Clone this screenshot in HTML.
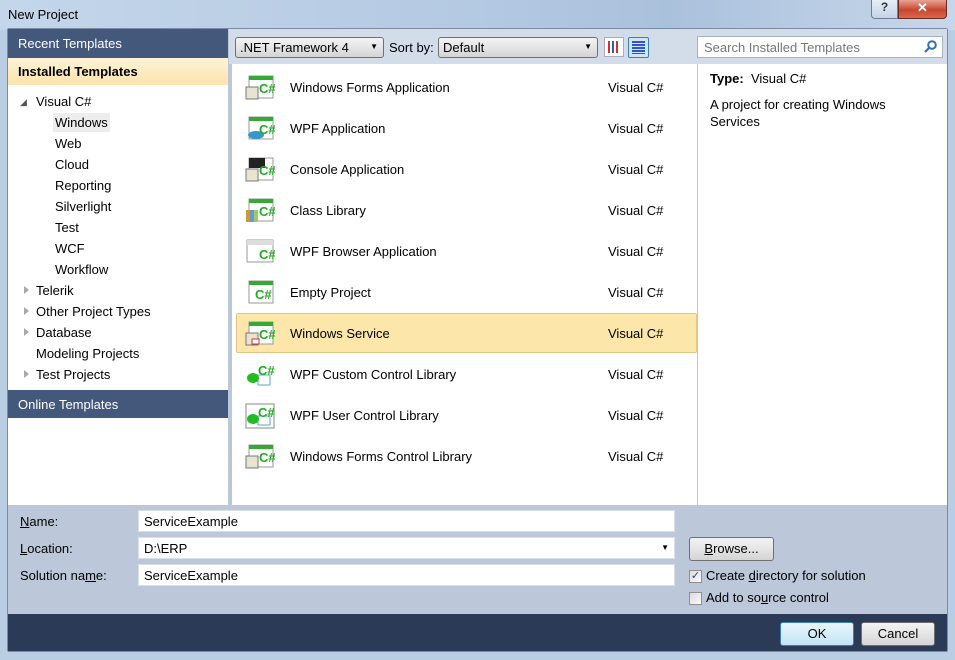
<!DOCTYPE html>
<html><head><meta charset="utf-8"><style>
*{margin:0;padding:0;box-sizing:border-box}
body{width:955px;height:660px;overflow:hidden;background:#b9cde3;font-family:"Liberation Sans",sans-serif;font-size:12.5px;color:#000;position:relative}
.a{position:absolute}
.title{left:0;top:0;width:955px;height:30px;background:linear-gradient(90deg,#c4d6ea,#b4c9e2 50%,#aac1dc 70%,#c7d7ea);}
.t{white-space:nowrap}
.hdr{background:#44587c;color:#fff;font-size:13px;padding-left:10px}
.tree div{position:absolute;white-space:nowrap;font-size:13px}
.tri{position:absolute;width:0;height:0;border-top:4px solid transparent;border-bottom:4px solid transparent;border-left:5px solid #aaa}
.row{position:absolute;left:236px;width:461px;height:40px}
.row .n{position:absolute;left:54px;top:13px;font-size:13px}
.row .l{position:absolute;left:372px;top:13px;font-size:13px}
.ic{position:absolute;left:9px;top:6px;width:30px;height:28px}
.inp{background:#fff;border:1px solid #d8dfe8;height:22px;padding:3px 5px;font-size:13px}
.btn{border:1px solid #707070;border-radius:3px;background:linear-gradient(#f3f3f3,#e5e5e5 50%,#d4d4d4);text-align:center;font-size:13px}
.cb{width:13px;height:13px;border:1px solid #8e8f8f;background:linear-gradient(135deg,#dcdcdc,#fafafa)}
</style></head><body>
<div class="a title"></div>
<div class="a t" style="left:8px;top:7px;font-size:13px">New Project</div>
<div class="a" style="left:871px;top:0;width:27px;height:19px;border:1px solid #6d7f98;border-top:none;border-radius:0 0 0 4px;background:linear-gradient(#e6eef8,#c3d3e6);text-align:center;font-size:12px;color:#333;font-weight:bold">?</div>
<div class="a" style="left:898px;top:0;width:49px;height:19px;border:1px solid #6d2a22;border-top:none;border-radius:0 0 4px 0;background:linear-gradient(#e8a493,#c7462f 55%,#d66a4f);text-align:center;color:#fff;font-weight:bold;font-size:13px">✕</div>

<div class="a" style="left:7px;top:28px;width:941px;height:624px;background:#bcc8d9;border:1px solid #7a8ba4;border-radius:2px"></div>
<div class="a hdr" style="left:8px;top:29px;width:220px;height:29px;line-height:29px">Recent Templates</div>
<div class="a" style="left:8px;top:58px;width:220px;height:27px;background:linear-gradient(#fdf3d6,#fbe4ad);font-weight:bold;font-size:13px;padding:6px 10px">Installed Templates</div>
<div class="a tree" style="left:8px;top:85px;width:220px;height:305px;background:#fff">
<div style="left:12px;top:12px;font-size:9px;color:#555">◢</div>
<div style="left:28px;top:9px">Visual C#</div>
<div style="left:45px;top:28px;background:#ededed;padding:2px 2px;">Windows</div>
<div style="left:47px;top:51px">Web</div>
<div style="left:47px;top:72px">Cloud</div>
<div style="left:47px;top:93px">Reporting</div>
<div style="left:47px;top:114px">Silverlight</div>
<div style="left:47px;top:135px">Test</div>
<div style="left:47px;top:156px">WCF</div>
<div style="left:47px;top:177px">Workflow</div>
<span class="tri" style="left:16px;top:201px"></span><div style="left:28px;top:198px">Telerik</div>
<span class="tri" style="left:16px;top:222px"></span><div style="left:28px;top:219px">Other Project Types</div>
<span class="tri" style="left:16px;top:243px"></span><div style="left:28px;top:240px">Database</div>
<div style="left:28px;top:261px">Modeling Projects</div>
<span class="tri" style="left:16px;top:285px"></span><div style="left:28px;top:282px">Test Projects</div>
</div>
<div class="a hdr" style="left:8px;top:390px;width:220px;height:28px;line-height:29px">Online Templates</div>
<div class="a" style="left:8px;top:418px;width:220px;height:87px;background:#fff"></div>

<div class="a" style="left:229px;top:29px;width:718px;height:35px;background:#d3dde9"></div>
<div class="a btn" style="left:235px;top:37px;width:149px;height:21px;text-align:left;padding:2px 4px;font-size:13px">.NET Framework 4<span style="position:absolute;right:5px;top:4px;font-size:8px">▼</span></div>
<div class="a t" style="left:389px;top:40px;font-size:13px">Sort by:</div>
<div class="a btn" style="left:438px;top:37px;width:160px;height:21px;text-align:left;padding:2px 4px;font-size:13px">Default<span style="position:absolute;right:5px;top:4px;font-size:8px">▼</span></div>
<div class="a" style="left:604px;top:37px;width:20px;height:20px;border:1px solid #aab;background:#fff"><div style="margin:3px;width:12px;height:12px;background:repeating-linear-gradient(90deg,#c33 0 2px,#fff 2px 4px,#35c 4px 6px,#fff 6px 8px)"></div></div>
<div class="a" style="left:628px;top:37px;width:21px;height:21px;border:1px solid #3c7fb1;border-radius:2px;background:#cbe6f7"><div style="margin:3px;width:13px;height:13px;background:repeating-linear-gradient(#35c 0 2px,transparent 2px 3px)"></div></div>
<div class="a" style="left:697px;top:36px;width:246px;height:22px;background:#fff;border:1px solid #a5b3c6;color:#777;font-size:13px;padding:3px 6px">Search Installed Templates<svg style="position:absolute;right:5px;top:3px" width="13" height="14"><circle cx="8" cy="5" r="3.8" fill="none" stroke="#2e6fb8" stroke-width="2"/><line x1="5" y1="8" x2="1" y2="12" stroke="#2e6fb8" stroke-width="2.2"/></svg></div>

<div class="a" style="left:232px;top:64px;width:465px;height:441px;background:#fff"></div>
<div class="a" style="left:698px;top:64px;width:249px;height:441px;background:#fff"></div>
<div class="a t" style="left:710px;top:71px;font-size:13px"><b>Type:</b>&nbsp; Visual C#</div>
<div class="a" style="left:710px;top:96px;font-size:13px;line-height:17px;width:220px">A project for creating Windows Services</div>

<div class="row" style="top:313px;background:#fce6a9;border:1px solid #e4c785;border-radius:2px"></div>

<div class="row" style="top:67px"><div class="ic"><svg width="30" height="28"><rect x="4" y="3" width="24" height="22" fill="#fff" stroke="#999"/><rect x="4" y="3" width="24" height="4" fill="#3a3"/><rect x="1" y="14" width="12" height="12" fill="#e9e4cf" stroke="#777"/><text x="14" y="20" font-size="13" font-weight="bold" fill="#2a2" font-family="Liberation Sans">C#</text></svg></div><span class="n">Windows Forms Application</span><span class="l">Visual C#</span></div>
<div class="row" style="top:108px"><div class="ic"><svg width="30" height="28"><rect x="4" y="3" width="24" height="22" fill="#fff" stroke="#999"/><rect x="4" y="3" width="24" height="4" fill="#3a3"/><ellipse cx="11" cy="21" rx="8" ry="4" fill="#39c"/><text x="14" y="20" font-size="13" font-weight="bold" fill="#2a2" font-family="Liberation Sans">C#</text></svg></div><span class="n">WPF Application</span><span class="l">Visual C#</span></div>
<div class="row" style="top:149px"><div class="ic"><svg width="30" height="28"><rect x="4" y="3" width="24" height="22" fill="#fff" stroke="#999"/><rect x="4" y="3" width="16" height="10" fill="#222"/><rect x="1" y="14" width="12" height="12" fill="#e9e4cf" stroke="#777"/><text x="14" y="20" font-size="13" font-weight="bold" fill="#2a2" font-family="Liberation Sans">C#</text></svg></div><span class="n">Console Application</span><span class="l">Visual C#</span></div>
<div class="row" style="top:190px"><div class="ic"><svg width="30" height="28"><rect x="4" y="3" width="24" height="22" fill="#fff" stroke="#999"/><rect x="4" y="3" width="24" height="4" fill="#3a3"/><rect x="1" y="14" width="4" height="12" fill="#c93"/><rect x="5" y="14" width="4" height="12" fill="#69c"/><rect x="9" y="14" width="4" height="12" fill="#9c6"/><text x="14" y="20" font-size="13" font-weight="bold" fill="#2a2" font-family="Liberation Sans">C#</text></svg></div><span class="n">Class Library</span><span class="l">Visual C#</span></div>
<div class="row" style="top:231px"><div class="ic"><svg width="30" height="28"><rect x="2" y="3" width="26" height="22" fill="#fff" stroke="#999"/><rect x="2" y="3" width="26" height="5" fill="#ddd"/><text x="14" y="22" font-size="13" font-weight="bold" fill="#2a2" font-family="Liberation Sans">C#</text></svg></div><span class="n">WPF Browser Application</span><span class="l">Visual C#</span></div>
<div class="row" style="top:272px"><div class="ic"><svg width="30" height="28"><rect x="4" y="3" width="24" height="22" fill="#fff" stroke="#999"/><rect x="4" y="3" width="24" height="4" fill="#3a3"/><text x="10" y="21" font-size="13" font-weight="bold" fill="#2a2" font-family="Liberation Sans">C#</text></svg></div><span class="n">Empty Project</span><span class="l">Visual C#</span></div>
<div class="row" style="top:313px"><div class="ic"><svg width="30" height="28"><rect x="4" y="3" width="24" height="22" fill="#fff" stroke="#999"/><rect x="4" y="3" width="24" height="4" fill="#3a3"/><rect x="1" y="14" width="12" height="12" fill="#e9e4cf" stroke="#777"/><rect x="7" y="20" width="7" height="5" fill="#fff" stroke="#c33"/><text x="14" y="20" font-size="13" font-weight="bold" fill="#2a2" font-family="Liberation Sans">C#</text></svg></div><span class="n">Windows Service</span><span class="l">Visual C#</span></div>
<div class="row" style="top:354px"><div class="ic"><svg width="30" height="28"><rect x="13" y="15" width="12" height="10" fill="#fff" stroke="#5ac"/><ellipse cx="8" cy="18" rx="6" ry="5" fill="#2b2"/><text x="13" y="15" font-size="13" font-weight="bold" fill="#2a2" font-family="Liberation Sans">C#</text></svg></div><span class="n">WPF Custom Control Library</span><span class="l">Visual C#</span></div>
<div class="row" style="top:395px"><div class="ic"><svg width="30" height="28"><rect x="1" y="3" width="28" height="24" fill="#fff" stroke="#888"/><rect x="13" y="15" width="12" height="9" fill="#fff" stroke="#5ac"/><ellipse cx="8" cy="18" rx="6" ry="5" fill="#2b2"/><text x="13" y="16" font-size="13" font-weight="bold" fill="#2a2" font-family="Liberation Sans">C#</text></svg></div><span class="n">WPF User Control Library</span><span class="l">Visual C#</span></div>
<div class="row" style="top:436px"><div class="ic"><svg width="30" height="28"><rect x="4" y="3" width="24" height="22" fill="#fff" stroke="#999"/><rect x="4" y="3" width="24" height="4" fill="#3a3"/><rect x="1" y="14" width="12" height="12" fill="#e9e4cf" stroke="#777"/><text x="14" y="20" font-size="13" font-weight="bold" fill="#2a2" font-family="Liberation Sans">C#</text></svg></div><span class="n">Windows Forms Control Library</span><span class="l">Visual C#</span></div>

<div class="a t" style="left:20px;top:514px;font-size:13px"><u>N</u>ame:</div>
<div class="a t" style="left:20px;top:541px;font-size:13px"><u>L</u>ocation:</div>
<div class="a t" style="left:20px;top:568px;font-size:13px">Solution na<u>m</u>e:</div>
<div class="a inp" style="left:138px;top:510px;width:537px">ServiceExample</div>
<div class="a inp" style="left:138px;top:537px;width:537px">D:\ERP<span style="position:absolute;right:5px;top:5px;font-size:8px">▼</span></div>
<div class="a inp" style="left:138px;top:564px;width:537px">ServiceExample</div>
<div class="a btn" style="left:689px;top:537px;width:85px;height:24px;line-height:22px"><u>B</u>rowse...</div>
<div class="a cb" style="left:689px;top:570px;font-size:11px;line-height:10px;color:#2a3f8f;text-align:center">✓</div>
<div class="a t" style="left:706px;top:568px;font-size:13px">Create <u>d</u>irectory for solution</div>
<div class="a cb" style="left:689px;top:592px"></div>
<div class="a t" style="left:706px;top:590px;font-size:13px">Add to so<u>u</u>rce control</div>

<div class="a" style="left:8px;top:614px;width:939px;height:37px;background:#2b3a56"></div>
<div class="a btn" style="left:780px;top:622px;width:74px;height:24px;line-height:22px;border-color:#3c7fb1;background:linear-gradient(#e8f5fc,#c4e5f6)">OK</div>
<div class="a btn" style="left:861px;top:622px;width:74px;height:24px;line-height:22px">Cancel</div>
</body></html>
